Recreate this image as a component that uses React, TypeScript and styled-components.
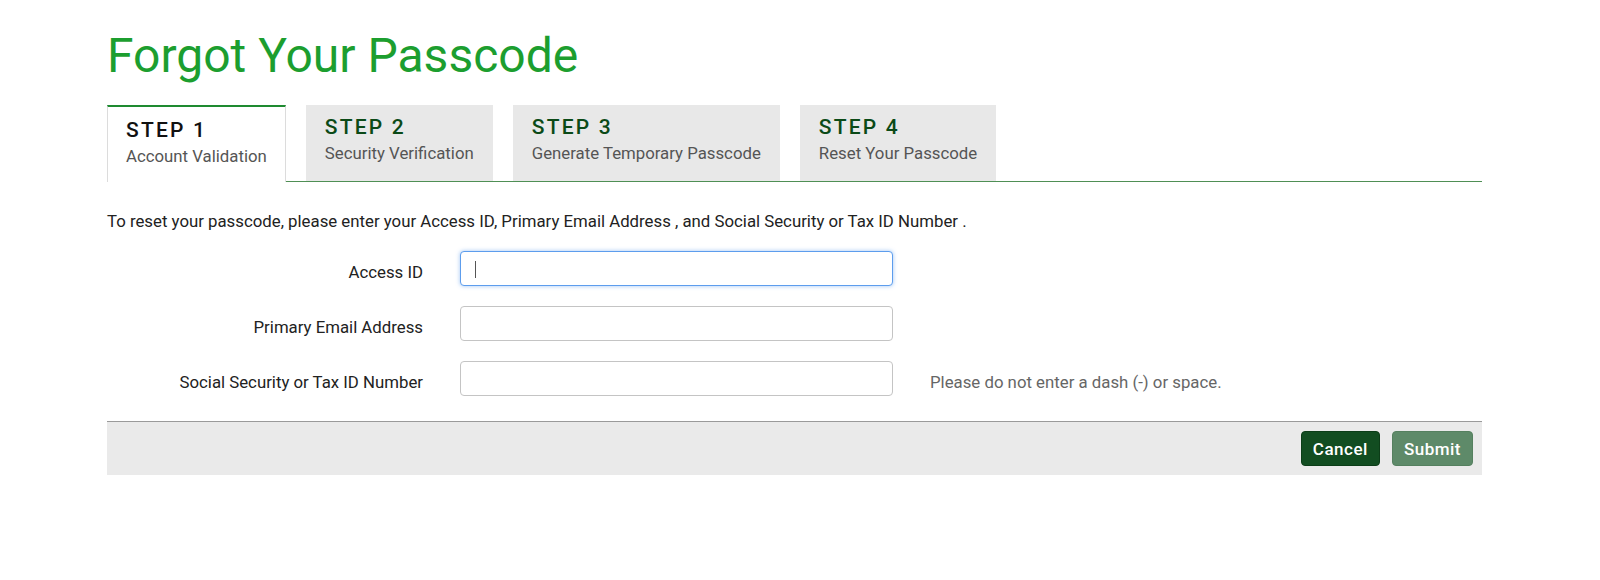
import styled, { createGlobalStyle } from 'styled-components'

const GlobalStyle = createGlobalStyle`
  body {
    margin: 0;
    background: #fff;
    font-family: Roboto, "Noto Sans", Arial, sans-serif;
    color: #222;
  }
`

const Page = styled.div`
  width: 1375px;
  padding: 28px 0 0 107px;
`

const Title = styled.h1`
  margin: 0 0 21px 0;
  font-size: 48px;
  line-height: 56px;
  font-weight: 400;
  color: #1c9e2f;
`

const TabBar = styled.div`
  display: flex;
  gap: 20px;
  height: 76px;
  border-bottom: 1px solid #4f8f55;
`

const Tab = styled.div<{ $active?: boolean }>`
  box-sizing: border-box;
  height: ${(p) => (p.$active ? '77px' : '76px')};
  padding: ${(p) => (p.$active ? '11px 18px 0 18px' : '10px 19px 0 19px')};
  background: ${(p) => (p.$active ? '#fff' : '#e8e8e8')};
  border-top: ${(p) => (p.$active ? '2px solid #1e8a30' : 'none')};
  border-left: ${(p) => (p.$active ? '1px solid #dcdcdc' : 'none')};
  border-right: ${(p) => (p.$active ? '1px solid #dcdcdc' : 'none')};
  white-space: nowrap;
`

const StepLabel = styled.div<{ $active?: boolean }>`
  font-size: 21px;
  line-height: 24px;
  font-weight: 500;
  letter-spacing: 2.2px;
  color: ${(p) => (p.$active ? '#111' : '#0b4a17')};
`

const StepName = styled.div`
  margin-top: 4px;
  font-size: 16.8px;
  line-height: 20px;
  color: #555;
`

const Intro = styled.p`
  margin: 29px 0 20px 0;
  font-size: 16.8px;
  line-height: 20px;
  color: #222;
`

const Fields = styled.div`
  display: flex;
  flex-direction: column;
  gap: 20px;
`

const Row = styled.div`
  display: grid;
  grid-template-columns: 316px 433px auto;
  column-gap: 37px;
  align-items: center;
`

const Label = styled.label`
  text-align: right;
  font-size: 16.8px;
  line-height: 20px;
  padding-top: 6px;
  color: #222;
`

const InputWrap = styled.div`
  position: relative;
  height: 35px;
`

const Input = styled.input<{ $focused?: boolean }>`
  box-sizing: border-box;
  width: 100%;
  height: 35px;
  border-radius: 4px;
  border: 1px solid ${(p) => (p.$focused ? '#5d9ded' : '#c4c4c4')};
  box-shadow: ${(p) => (p.$focused ? '0 0 4px rgba(80, 150, 235, 0.55)' : 'none')};
  outline: none;
  padding: 0 14px;
  font-family: Roboto, sans-serif;
  font-size: 16px;
  background: #fff;
`

const Caret = styled.span`
  position: absolute;
  left: 15px;
  top: 10px;
  width: 1px;
  height: 17px;
  background: #555;
`

const Hint = styled.span`
  font-size: 16.8px;
  line-height: 20px;
  padding-top: 6px;
  color: #666;
`

const Footer = styled.div`
  margin-top: 25px;
  display: flex;
  justify-content: flex-end;
  gap: 12px;
  padding: 9px 9px 9px 9px;
  background: #eaeaea;
  border-top: 1px solid #9a9a9a;
`

const Button = styled.button<{ $variant: 'primary' | 'muted' }>`
  height: 35px;
  padding: 0 11px;
  border: 1px solid ${(p) => (p.$variant === 'primary' ? '#0c3d18' : '#55805f')};
  border-radius: 4px;
  background: ${(p) => (p.$variant === 'primary' ? '#124d21' : '#5e8a69')};
  color: #fff;
  font-family: Roboto, sans-serif;
  font-size: 17px;
  font-weight: 500;
  letter-spacing: 0.5px;
`

const steps = [
  { label: 'STEP 1', name: 'Account Validation' },
  { label: 'STEP 2', name: 'Security Verification' },
  { label: 'STEP 3', name: 'Generate Temporary Passcode' },
  { label: 'STEP 4', name: 'Reset Your Passcode' },
]

const fields = [
  { label: 'Access ID', focused: true },
  { label: 'Primary Email Address' },
  { label: 'Social Security or Tax ID Number', hint: 'Please do not enter a dash (-) or space.' },
]

export default function App() {
  return (
    <>
      <GlobalStyle />
      <Page>
        <Title>Forgot Your Passcode</Title>
        <TabBar>
          {steps.map((s, i) => (
            <Tab key={s.label} $active={i === 0}>
              <StepLabel $active={i === 0}>{s.label}</StepLabel>
              <StepName>{s.name}</StepName>
            </Tab>
          ))}
        </TabBar>
        <Intro>
          To reset your passcode, please enter your Access ID, Primary Email Address , and Social
          Security or Tax ID Number .
        </Intro>
        <Fields>
          {fields.map((f) => (
            <Row key={f.label}>
              <Label>{f.label}</Label>
              <InputWrap>
                <Input $focused={f.focused} readOnly />
                {f.focused && <Caret />}
              </InputWrap>
              {f.hint ? <Hint>{f.hint}</Hint> : <span />}
            </Row>
          ))}
        </Fields>
        <Footer>
          <Button $variant="primary">Cancel</Button>
          <Button $variant="muted">Submit</Button>
        </Footer>
      </Page>
    </>
  )
}
